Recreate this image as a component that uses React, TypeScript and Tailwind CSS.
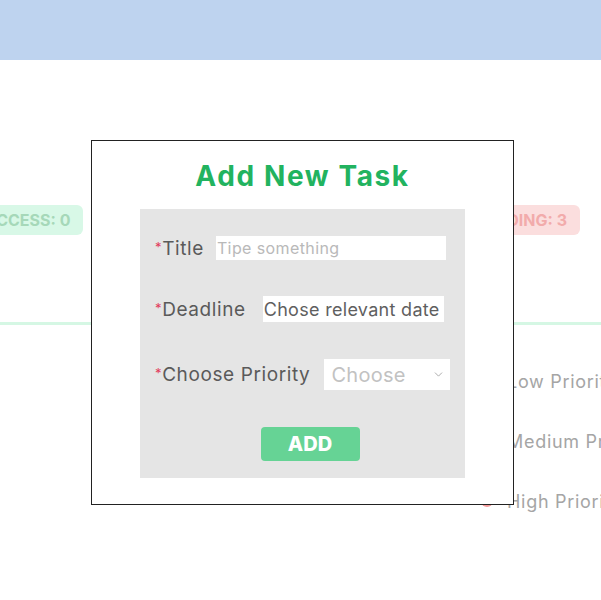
import { ChevronDown } from "lucide-react"

const stats = [
  { label: "SUCCESS: 0", bg: "bg-[#d8f8e7]", fg: "text-[#a6d8b9]" },
  { label: "TOTAL: 3", bg: "bg-[#dbe7f8]", fg: "text-[#a9bfe0]" },
  { label: "PENDING: 3", bg: "bg-[#fbdede]", fg: "text-[#f2abab]" },
]

const priorities = [
  { label: "Low Priority", dot: "bg-[#7fe0a8]" },
  { label: "Medium Priority", dot: "bg-[#f6d77a]" },
  { label: "High Priority", dot: "bg-[#f39a9a]" },
]

function Label({ text }: { text: string }) {
  return (
    <span className="whitespace-nowrap text-[19px] leading-none tracking-[0.6px] text-[#5a5a5a]">
      <sup className="relative -top-[3px] text-[13px] text-[#e23b5c]">*</sup>
      {text}
    </span>
  )
}

export default function App() {
  return (
    <div className="relative min-h-[600px] w-full overflow-hidden bg-white font-['Inter',sans-serif]">
      <header className="h-[60px] bg-[#bed3ef]" />

      {/* Stats */}
      <section className="mt-[145px] flex h-[30px] items-center justify-between pr-[21px]">
        {stats.map((s, i) => (
          <span
            key={s.label}
            className={`flex h-[30px] items-center rounded-[6px] px-[13px] text-[16px] font-bold whitespace-nowrap ${s.bg} ${s.fg} ${i === 0 ? "-ml-[39px]" : ""}`}
          >
            {s.label}
          </span>
        ))}
      </section>

      <div className="mt-[87px] h-[3px] bg-[#d5f7e4]" />

      {/* Priority legend */}
      <div className="flex">
        <div className="w-[481px] shrink-0" />
        <ul className="mt-[42px] flex flex-col gap-8">
          {priorities.map((p) => (
            <li key={p.label} className="flex h-7 items-center gap-[14px] whitespace-nowrap">
              <span className={`h-3 w-3 shrink-0 rounded-full ${p.dot}`} />
              <span className="text-[18px] tracking-[0.7px] text-[#a5a5a5]">{p.label}</span>
            </li>
          ))}
        </ul>
      </div>

      {/* Modal */}
      <div className="absolute left-[91px] top-[140px] flex h-[365px] w-[423px] flex-col items-center border border-[#222] bg-white">
        <h2 className="mt-[17px] text-[28px] leading-[36px] font-bold tracking-[1.6px] text-[#22b35f]">Add New Task</h2>

        <form className="mt-[15px] flex h-[269px] w-[325px] flex-col bg-[#e5e5e5] pl-[15px] pt-[27px]">
          <div className="flex h-[24px] items-center gap-[12px]">
            <Label text="Title" />
            <input
              className="h-[24px] w-[230px] bg-white px-[1px] text-[16px] tracking-[0.4px] text-[#555] outline-none placeholder:text-[#b9b9b9]"
              placeholder="Tipe something"
            />
          </div>

          <div className="mt-[36px] flex h-[26px] items-center gap-[17px]">
            <Label text="Deadline" />
            <input
              className="h-[26px] w-[181px] bg-white px-[1px] text-[18px] tracking-[0.3px] text-[#5f5f5f] outline-none placeholder:text-[#5f5f5f]"
              placeholder="Chose relevant date"
            />
          </div>

          <div className="mt-[37px] flex h-[31px] items-center gap-[14px]">
            <Label text="Choose Priority" />
            <div className="relative h-[31px] w-[126px]">
              <select className="h-full w-full appearance-none bg-white pl-[7px] text-[20px] tracking-[0.3px] text-[#c2c2c2] outline-none">
                <option>Choose</option>
                <option>Low</option>
                <option>Medium</option>
                <option>High</option>
              </select>
              <ChevronDown className="pointer-events-none absolute right-[5px] top-[9px] h-[13px] w-[13px] text-[#9a9a9a]" strokeWidth={1.5} />
            </div>
          </div>

          <button
            type="button"
            className="mt-[37px] h-[34px] w-[99px] self-center rounded-[4px] bg-[#66d395] text-[20px] font-extrabold text-white"
          >
            ADD
          </button>
        </form>
      </div>
    </div>
  )
}
